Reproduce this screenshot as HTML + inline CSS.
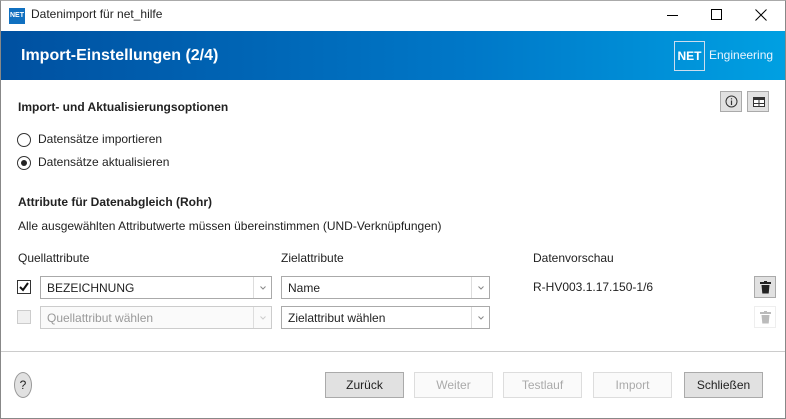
<!DOCTYPE html><html><head><meta charset="utf-8"><style>
*{box-sizing:border-box;margin:0;padding:0}
body{width:786px;height:419px;overflow:hidden;font-family:"Segoe UI","Liberation Sans",sans-serif;font-size:12px;color:#222;background:#fff;position:relative}
.abs{position:absolute}
.win{position:absolute;left:0;top:0;width:786px;height:419px;border:1px solid #888;border-top:1px solid #aaa}
.hdr{left:1px;top:31px;width:784px;height:49px;background:linear-gradient(90deg,#0050a0,#0078c8 60%,#00a0e2)}
.dd{position:absolute;height:23px;border:1px solid #aaa;background:#fff;padding:4px 6px;font-size:12px}
.dd .ar{position:absolute;right:0;top:0;width:18px;height:21px;border-left:1px solid #ddd}
.dd .ar svg{position:absolute;left:6px;top:9px}
.btn{position:absolute;top:372px;width:79px;height:26px;border:1px solid #aaa;background:#e1e1e1;text-align:center;line-height:24px;font-size:12px}
.btn.dis{background:#fafafa;border-color:#ddd;color:#aaa}
</style></head><body>
<div class="win"></div>
<div class="abs" style="left:9px;top:8px;width:16px;height:16px;background:#1070c0;color:#fff;font-size:7px;font-weight:bold;line-height:16px;text-align:center">NET</div>
<div class="abs" style="left:31px;top:7px;font-size:12px">Datenimport für net_hilfe</div>
<div class="abs" style="left:667px;top:15px;width:11px;border-top:1px solid #000"></div>
<div class="abs" style="left:711px;top:9px;width:11px;height:11px;border:1px solid #000"></div>
<svg class="abs" style="left:755px;top:9px" width="12" height="12"><path d="M0.5 0.5L11.5 11.5M11.5 0.5L0.5 11.5" stroke="#000" stroke-width="1"/></svg>
<div class="abs hdr"></div>
<div class="abs" style="left:21px;top:47px;color:#fff;font-size:16px;font-weight:bold">Import-Einstellungen (2/4)</div>
<div class="abs" style="left:674px;top:41px;width:31px;height:30px;border:1px solid #cde;color:#fff;font-weight:bold;font-size:12px;text-align:center;line-height:28px">NET</div>
<div class="abs" style="left:709px;top:48px;color:#e8f4ff;font-size:12px">Engineering</div>
<div class="abs" style="left:720px;top:91px;width:22px;height:21px;border:1px solid #aaa;background:#e1e1e1"><svg style="position:absolute;left:4px;top:3px" width="13" height="13"><circle cx="6.5" cy="6.5" r="5.5" fill="none" stroke="#333"/><path d="M6.5 5.5V10M6.5 3.2V4.4" stroke="#333" stroke-width="1.2"/></svg></div>
<div class="abs" style="left:747px;top:91px;width:22px;height:21px;border:1px solid #aaa;background:#e1e1e1"><svg style="position:absolute;left:5px;top:5px" width="12" height="10"><rect x="0.5" y="0.5" width="11" height="9" fill="#fff" stroke="#333"/><rect x="0" y="0" width="12" height="3" fill="#333"/><path d="M6 3V10M0 6.5H12" stroke="#333"/></svg></div>
<div class="abs" style="left:18px;top:100px;font-weight:bold">Import- und Aktualisierungsoptionen</div>
<div class="abs" style="left:17px;top:133px;width:14px;height:14px;border:1px solid #333;border-radius:50%"></div>
<div class="abs" style="left:38px;top:132px">Datensätze importieren</div>
<div class="abs" style="left:17px;top:156px;width:14px;height:14px;border:1px solid #333;border-radius:50%"><div style="margin:3px;width:6px;height:6px;background:#222;border-radius:50%"></div></div>
<div class="abs" style="left:38px;top:155px">Datensätze aktualisieren</div>
<div class="abs" style="left:18px;top:195px;font-weight:bold">Attribute für Datenabgleich (Rohr)</div>
<div class="abs" style="left:18px;top:219px">Alle ausgewählten Attributwerte müssen übereinstimmen (UND-Verknüpfungen)</div>
<div class="abs" style="left:18px;top:251px">Quellattribute</div>
<div class="abs" style="left:281px;top:251px">Zielattribute</div>
<div class="abs" style="left:533px;top:251px">Datenvorschau</div>
<div class="abs" style="left:17px;top:280px;width:14px;height:14px;border:1px solid #333"><svg width="12" height="12"><path d="M2 6L5 9L10 2" fill="none" stroke="#111" stroke-width="2"/></svg></div>
<div class="dd" style="left:40px;top:276px;width:232px">BEZEICHNUNG<div class="ar"><svg width="6" height="4"><path d="M0.5 0.5L3 3L5.5 0.5" fill="none" stroke="#888"/></svg></div></div>
<div class="dd" style="left:281px;top:276px;width:209px">Name<div class="ar"><svg width="6" height="4"><path d="M0.5 0.5L3 3L5.5 0.5" fill="none" stroke="#888"/></svg></div></div>
<div class="abs" style="left:533px;top:280px">R-HV003.1.17.150-1/6</div>
<div class="abs" style="left:754px;top:276px;width:22px;height:22px;border:1px solid #aaa;background:#e1e1e1"><svg style="position:absolute;left:5px;top:4px" width="11" height="13"><rect x="0" y="1" width="11" height="2" fill="#222"/><rect x="4" y="0" width="3" height="2" fill="#222"/><path d="M1.5 4H9.5L8.7 12.5H2.3Z" fill="#222"/></svg></div>
<div class="abs" style="left:17px;top:310px;width:14px;height:14px;border:1px solid #ccc;background:#f0f0f0"></div>
<div class="dd" style="left:40px;top:306px;width:232px;color:#999;border-color:#ccc;background:#fafafa">Quellattribut wählen<div class="ar"><svg width="6" height="4"><path d="M0.5 0.5L3 3L5.5 0.5" fill="none" stroke="#ccc"/></svg></div></div>
<div class="dd" style="left:281px;top:306px;width:209px">Zielattribut wählen<div class="ar"><svg width="6" height="4"><path d="M0.5 0.5L3 3L5.5 0.5" fill="none" stroke="#888"/></svg></div></div>
<div class="abs" style="left:754px;top:306px;width:22px;height:22px;border:1px solid #eee"><svg style="position:absolute;left:5px;top:4px" width="11" height="13"><rect x="0" y="1" width="11" height="2" fill="#bbb"/><rect x="4" y="0" width="3" height="2" fill="#bbb"/><path d="M1.5 4H9.5L8.7 12.5H2.3Z" fill="#bbb"/></svg></div>
<div class="abs" style="left:1px;top:351px;width:784px;border-top:1px solid #ccc"></div>
<div class="abs" style="left:14px;top:372px;width:18px;height:26px;border:1px solid #999;background:#e1e1e1;border-radius:50%;text-align:center;line-height:24px">?</div>
<div class="btn" style="left:325px">Zurück</div>
<div class="btn dis" style="left:414px">Weiter</div>
<div class="btn dis" style="left:503px">Testlauf</div>
<div class="btn dis" style="left:593px">Import</div>
<div class="btn" style="left:684px">Schließen</div>
</body></html>
